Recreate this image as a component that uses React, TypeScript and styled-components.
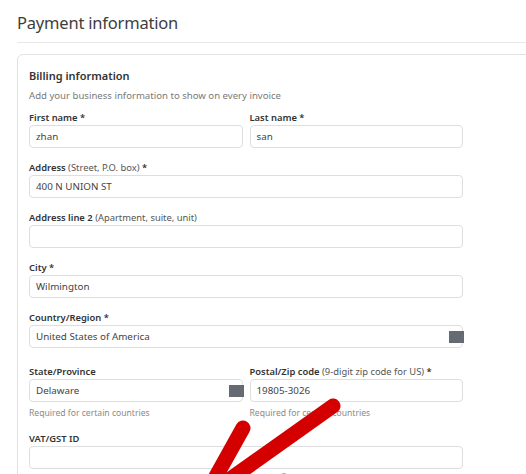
import styled, { createGlobalStyle } from 'styled-components';

const GlobalStyle = createGlobalStyle`
  html, body {
    margin: 0;
    padding: 0;
    background: #ffffff;
    overflow: hidden;
    font-family: 'Noto Sans', 'Open Sans', Arial, sans-serif;
  }
`;

type FieldProps = {
  label: string;
  hint?: string;
  required?: boolean;
  value?: string;
  select?: boolean;
  help?: string;
};

const Field = ({ label, hint, required = false, value = '', select = false, help }: FieldProps) => (
  <FieldWrap>
    <Label>
      {label}
      {hint && <Hint> {hint}</Hint>}
      {required && ' *'}
    </Label>
    <InputBox>
      {value}
      {select && <Caret />}
    </InputBox>
    {help && <Help>{help}</Help>}
  </FieldWrap>
);

const App = () => {
  return (
    <Page>
      <GlobalStyle />
      <Title>Payment information</Title>
      <Divider />
      <Card>
        <CardTitle>Billing information</CardTitle>
        <CardSub>Add your business information to show on every invoice</CardSub>
        <Form>
          <Row>
            <Field label="First name" required value="zhan" />
            <Field label="Last name" required value="san" />
          </Row>
          <Field label="Address" hint="(Street, P.O. box)" required value="400 N UNION ST" />
          <Field label="Address line 2" hint="(Apartment, suite, unit)" />
          <Field label="City" required value="Wilmington" />
          <Field label="Country/Region" required value="United States of America" select />
          <Row $offset={4}>
            <Field label="State/Province" value="Delaware" select help="Required for certain countries" />
            <Field
              label="Postal/Zip code"
              hint="(9-digit zip code for US)"
              required
              value="19805-3026"
              help="Required for certain countries"
            />
          </Row>
          <Field label="VAT/GST ID" />
        </Form>
      </Card>
      <Arrow viewBox="0 0 526 474" width="526" height="474">
        <g stroke="#d40000" strokeWidth="15" strokeLinecap="round" strokeLinejoin="round" fill="none">
          <path d="M333 406 L212 492" />
          <path d="M243 428 L204 498 L284 481" />
        </g>
      </Arrow>
    </Page>
  );
};

const Page = styled.div`
  position: relative;
  width: 580px;
  padding: 10px 0 0 17px;
`;

const Title = styled.h1`
  margin: 0;
  font-size: 16.5px;
  font-weight: 400;
  letter-spacing: -0.2px;
  line-height: 26px;
  color: #3d3d3d;
`;

const Divider = styled.div`
  height: 1px;
  margin-top: 6px;
  background: #e8e8e8;
`;

const Card = styled.div`
  margin-top: 11px;
  border: 1px solid #e2e2e2;
  border-radius: 6px;
  padding: 12px 11px 20px;
`;

const CardTitle = styled.div`
  font-size: 11px;
  font-weight: 600;
  line-height: 18px;
  color: #333;
`;

const CardSub = styled.div`
  margin-top: 4px;
  font-size: 9.6px;
  line-height: 14px;
  color: #7a7a7a;
`;

const Form = styled.div`
  width: 434px;
  margin-top: 9px;
  display: flex;
  flex-direction: column;
  gap: 14px;
`;

const Row = styled.div<{ $offset?: number }>`
  display: grid;
  grid-template-columns: 1fr 1fr;
  gap: 7px;
  margin-top: ${(props) => props.$offset || 0}px;
`;

const FieldWrap = styled.div`
  display: flex;
  flex-direction: column;
  min-width: 0;
`;

const Label = styled.div`
  margin-bottom: 1px;
  font-size: 9.4px;
  font-weight: 600;
  line-height: 12px;
  color: #333;
  white-space: nowrap;
`;

const Hint = styled.span`
  font-weight: 400;
  color: #555;
`;

const InputBox = styled.div`
  position: relative;
  height: 21px;
  border: 1px solid #dedede;
  border-radius: 4px;
  padding: 0 6px;
  display: flex;
  align-items: center;
  font-size: 9.8px;
  color: #444;
`;

const Caret = styled.span`
  position: absolute;
  right: -2px;
  top: 5px;
  width: 15px;
  height: 12px;
  background: #666a73;
`;

const Help = styled.div`
  margin-top: 5px;
  font-size: 8.6px;
  line-height: 12px;
  color: #8a8a8a;
`;

const Arrow = styled.svg`
  position: absolute;
  left: 0;
  top: 0;
  pointer-events: none;
`;

export default App;
